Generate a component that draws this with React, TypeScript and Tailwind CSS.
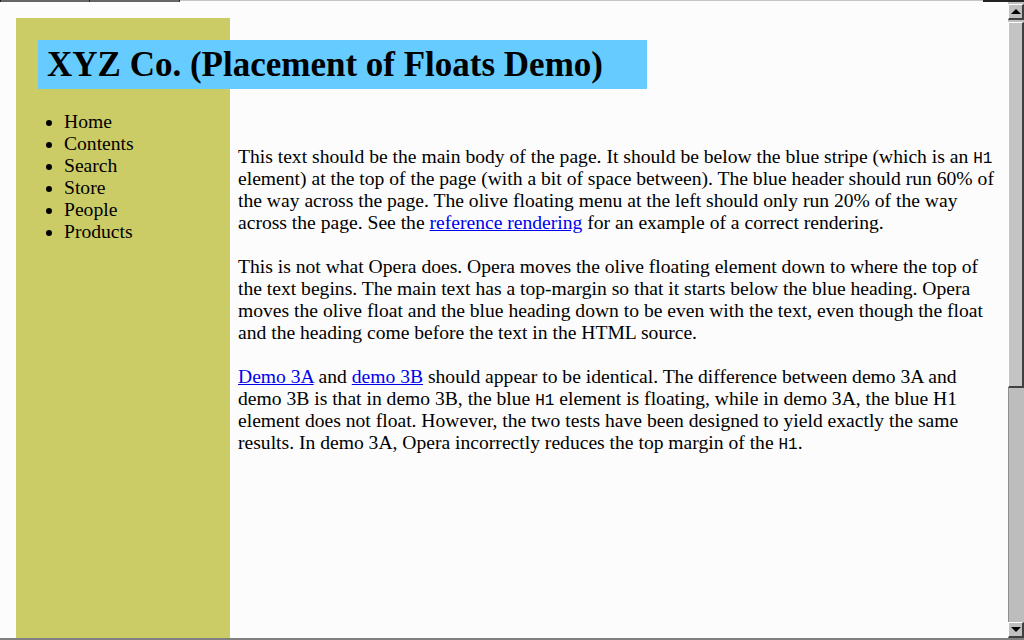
import React from "react";

const navItems = ["Home", "Contents", "Search", "Store", "People", "Products"];

function Code({ children }: { children: React.ReactNode }) {
  return <code className="font-['Liberation_Mono',monospace] text-[16px] leading-none">{children}</code>;
}

function Link({ children }: { children: React.ReactNode }) {
  return (
    <a href="#" className="text-[#0000ee] underline">
      {children}
    </a>
  );
}

function ScrollBar() {
  return (
    <div className="flex w-[16px] shrink-0 flex-col bg-[#c0c0c0] pt-[2px]">
      <div className="flex h-[16px] items-center justify-center border-t border-l border-white border-r-2 border-b-2 border-r-[#404040] border-b-[#404040] bg-[#c0c0c0]">
        <span className="block h-0 w-0 border-x-[5px] border-b-[5px] border-x-transparent border-b-black" />
      </div>
      <div className="mt-[2px] h-[366px] border-t border-l border-white border-r-2 border-b-2 border-r-[#404040] border-b-[#404040] bg-[#c4c4c4]" />
      <div className="flex-1 border-l border-[#909090] bg-[#bdbdbd]" />
      <div className="flex h-[16px] items-center justify-center border-t border-l border-white border-r-2 border-b-2 border-r-[#404040] border-b-[#404040] bg-[#c0c0c0]">
        <span className="block h-0 w-0 border-x-[5px] border-t-[5px] border-x-transparent border-t-black" />
      </div>
    </div>
  );
}

export default function App() {
  return (
    <div className="flex h-[640px] w-[1024px] flex-col overflow-hidden bg-[#fcfcfc] font-['Liberation_Serif',serif] text-black">
      {/* window strip */}
      <div className="flex h-[2px]">
        <div className="w-[90px] border-x border-[#222] bg-[#666]" />
        <div className="w-[90px] border-r border-[#222] bg-[#666]" />
        <div className="flex-1 border-t border-[#c4c4c4]" />
        <div className="w-[41px] bg-[#222]" />
      </div>

      <div className="flex min-h-0 flex-1">
        <div className="flex min-w-0 flex-1 pl-4 pt-4">
          <div className="w-[214px] shrink-0 bg-[#cccc66] pt-[93px]">
            <ul className="list-disc pl-[48px] text-[19.6px] leading-[22px]">
              {navItems.map((item) => (
                <li key={item}>{item}</li>
              ))}
            </ul>
          </div>

          <div className="min-w-0 flex-1 pl-2">
            <h1 className="relative ml-[-200px] mt-[22px] h-[49px] w-[609px] whitespace-nowrap bg-[#66ccff] pl-[9px] pt-[5px] text-[35px] font-bold leading-[40px]">
              XYZ Co. (Placement of Floats Demo)
            </h1>

            <div className="mt-[57px] space-y-[22px] whitespace-nowrap text-[19.6px] leading-[22px]">
              <p>
                This text should be the main body of the page. It should be below the blue stripe (which is an <Code>H1</Code>
                <br />
                element) at the top of the page (with a bit of space between). The blue header should run 60% of
                <br />
                the way across the page. The olive floating menu at the left should only run 20% of the way
                <br />
                across the page. See the <Link>reference rendering</Link> for an example of a correct rendering.
              </p>
              <p>
                This is not what Opera does. Opera moves the olive floating element down to where the top of
                <br />
                the text begins. The main text has a top-margin so that it starts below the blue heading. Opera
                <br />
                moves the olive float and the blue heading down to be even with the text, even though the float
                <br />
                and the heading come before the text in the HTML source.
              </p>
              <p>
                <Link>Demo 3A</Link> and <Link>demo 3B</Link> should appear to be identical. The difference between demo 3A and
                <br />
                demo 3B is that in demo 3B, the blue <Code>H1</Code> element is floating, while in demo 3A, the blue H1
                <br />
                element does not float. However, the two tests have been designed to yield exactly the same
                <br />
                results. In demo 3A, Opera incorrectly reduces the top margin of the <Code>H1</Code>.
              </p>
            </div>
          </div>
        </div>
        <ScrollBar />
      </div>

      <div className="h-[2px] bg-[#808080]" />
    </div>
  );
}
